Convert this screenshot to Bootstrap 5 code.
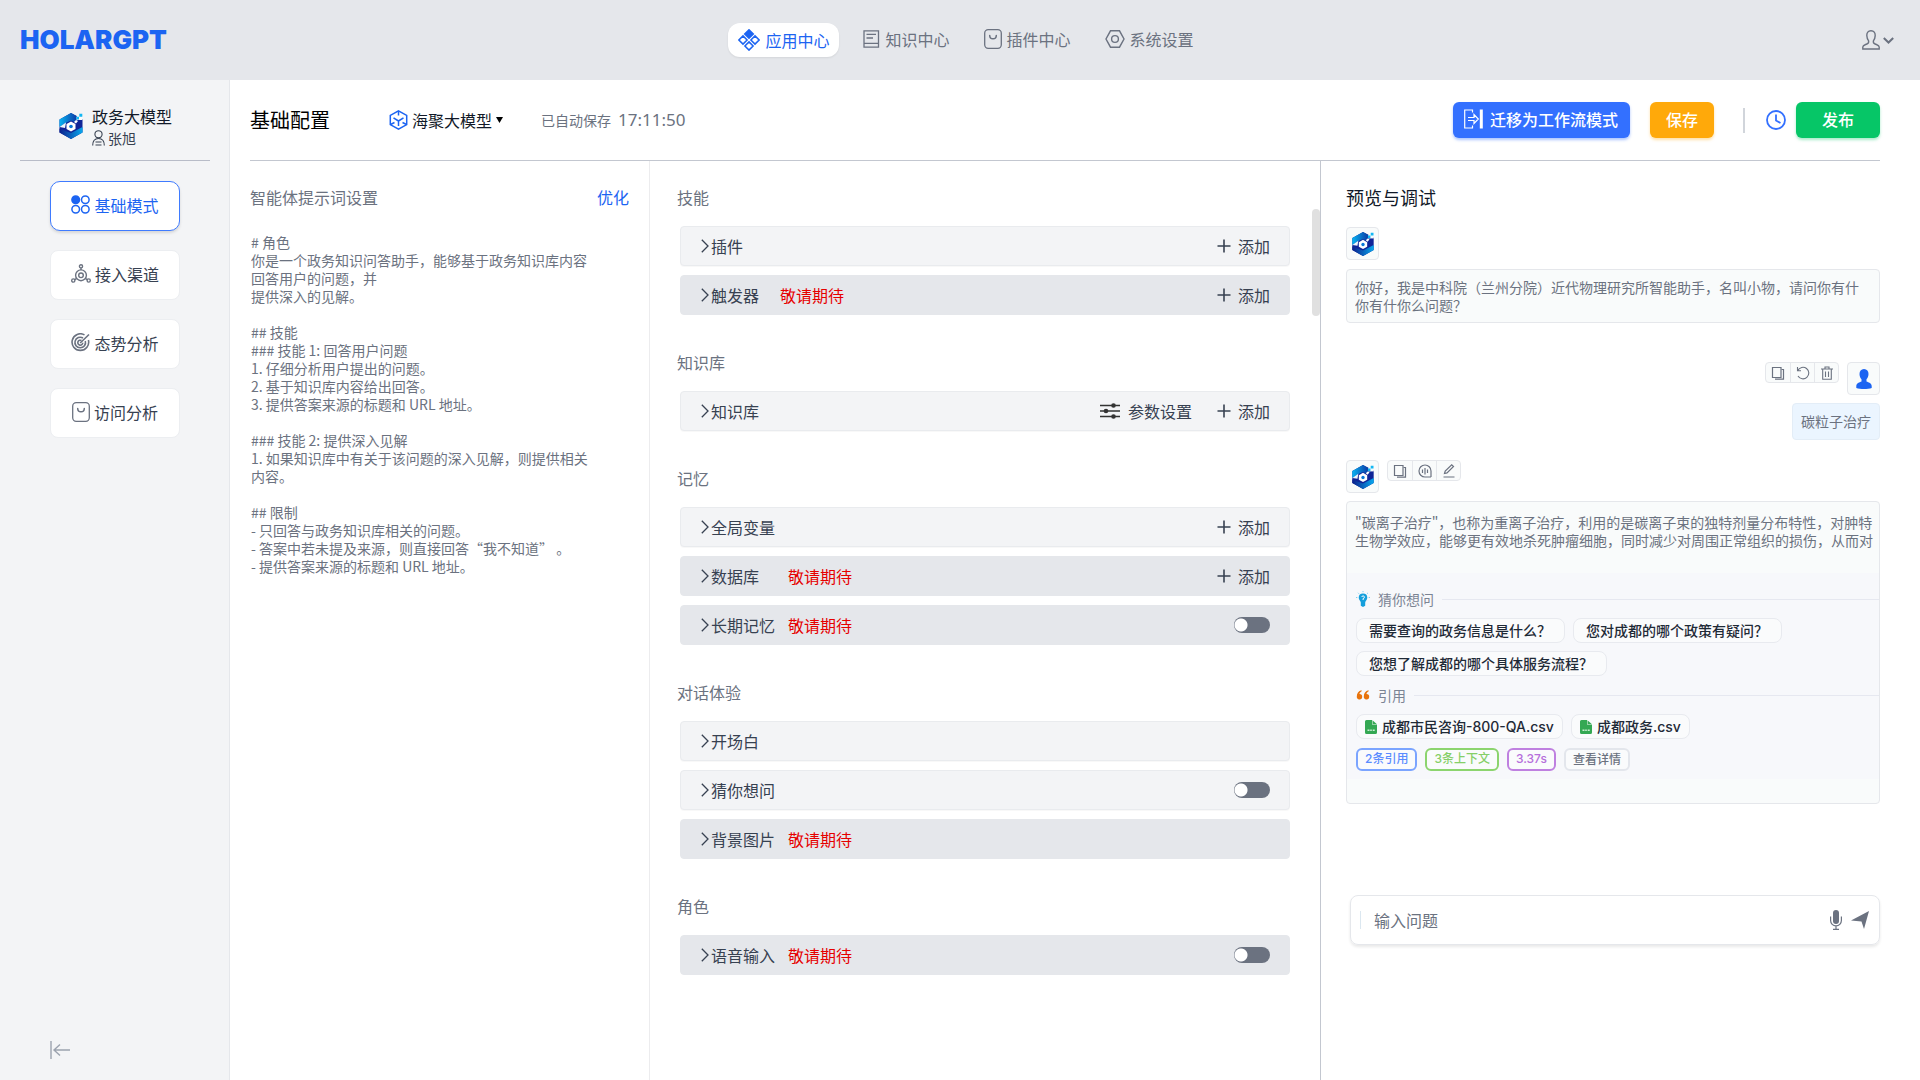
<!DOCTYPE html>
<html lang="zh-CN">
<head>
<meta charset="utf-8">
<meta name="viewport" content="width=device-width, initial-scale=1">
<title>HOLARGPT - 基础配置</title>
<link href="https://cdn.jsdelivr.net/npm/bootstrap@5.3.0/dist/css/bootstrap.min.css" rel="stylesheet">
<style>
  :root { --blue: #1c64f2; --ink: #374151; --muted-ink: #6b7280; --dark: #111928; --edge: #e5e7eb; --soft: #f9fbfb; }
  body { font-family: "Noto Sans CJK SC", "Noto Sans", sans-serif; font-size: 16px; line-height: 24px; color: var(--ink); background: #fff; }
  svg { display: block; flex: none; }
  a { text-decoration: none; }
  button { font: inherit; color: inherit; }
  .plain-btn { background: none; border: 0; padding: 0; }

  .topbar { height: 80px; background: #e5e7eb; padding: 0 26px 0 20px; }
  .topbar .side { flex: 1 1 0; }
  .brand { font: 900 26px/32px Inter, sans-serif; color: var(--blue); }
  .main-nav { gap: 14px; margin-left: 8px; }
  .main-nav a { height: 34px; padding: 0 10px 2px; gap: 5px; color: var(--muted-ink); }
  .main-nav a:last-child { padding-right: 0; }
  .main-nav a.active { background: #fff; color: var(--blue); border-radius: 12px; padding-bottom: 0; box-shadow: 0 1px 2px rgba(0,0,0,.08); }
  .account { color: var(--muted-ink); gap: 3px; }

  .shell { min-height: calc(100vh - 80px); }
  .sidebar { flex: 0 0 230px; background: #f3f4f6; border-right: 1px solid var(--edge); padding: 0 19px 20px 20px; }
  .profile { height: 81px; padding-left: 38px; padding-top: 12px; gap: 8px; border-bottom: 1px solid #b8bcc8; color: var(--dark); }
  .profile-user { font-size: 14px; line-height: 20px; color: var(--ink); gap: 3px; }
  .side-menu { gap: 19px; padding: 20px 30px 0; }
  .side-menu a { height: 50px; gap: 4px; background: #fff; border: 1px solid #eceef1; border-radius: 8px; color: var(--ink); padding-bottom: 3px; }
  .side-menu a.active { border-color: #3f7bff; border-radius: 10px; color: var(--blue); box-shadow: 0 2px 3px rgba(0,0,0,.12); }
  .collapse-btn { margin-left: 30px; }

  .workspace { flex: 1 1 0; min-width: 0; }
  .toolbar-row { height: 81px; margin: 0 40px 0 20px; border-bottom: 1px solid #c3c7d0; }
  .page-title { font-size: 20px; line-height: 28px; font-weight: 400; color: #000; margin: 0 59px 0 0; }
  .model-pick { gap: 4px; margin-right: 38px; color: var(--dark); }
  .autosave { font-size: 14px; color: var(--muted-ink); gap: 7px; }
  .autosave time { font-size: 17px; font-family: "Noto Sans", sans-serif; }
  .act { height: 36px; border: 0; border-radius: 6px; color: #fff; padding: 0 12px 2px; font-weight: 500; }
  .act-move { background: #3370ff; gap: 7px; padding-left: 11px; box-shadow: 0 2px 3px rgba(51,112,255,.4); }
  .act-save { background: #ffa90a; padding-left: 16px; padding-right: 16px; margin-left: 20px; box-shadow: 0 2px 3px rgba(255,169,10,.35); }
  .act-pub { background: #06c667; padding-left: 26px; padding-right: 26px; margin-left: 10px; box-shadow: 0 2px 3px rgba(6,198,103,.35); }
  .act-rule { width: 2px; height: 25px; background: #d1d5db; margin: 0 21px 0 29px; }

  .pane { min-width: 0; padding-top: 24px; }
  .pane-prompt { flex: 420 420 420px; border-right: 1px solid #ececee; padding-left: 20px; padding-right: 20px; }
  .pane-config { flex: 671 671 671px; border-right: 1px solid #c3c7d0; padding-left: 27px; padding-right: 30px; }
  .pane-chat { flex: 599 599 599px; padding-left: 25px; padding-right: 40px; }
  .pane-head { font-size: 16px; line-height: 24px; font-weight: 400; color: var(--muted-ink); margin: 0; }
  .tune-link { color: var(--blue); }
  .prompt-box { display: block; width: 100%; max-width: 346px; height: 480px; margin: 24px 0 0 1px; padding: 0; border: 0; resize: none; overflow: hidden; font-size: 14px; line-height: 18px; color: var(--muted-ink); background: none; }

  .cfg-group { margin-bottom: 35px; }
  .cfg-rows { margin: 17px 0 0 3px; gap: 9px; }
  .cfg-row { height: 40px; border-radius: 4px; padding: 0 19px 1px 20px; background: #f3f4f6; border: 1px solid #e9ebee; box-shadow: 0 1px 1px rgba(0,0,0,.03); }
  .cfg-row.pending { background: #e5e7eb; border-color: #e5e7eb; box-shadow: none; }
  .cfg-name { gap: 2px; min-width: 75px; }
  .cfg-name.tight { min-width: 67px; }
  .soon { color: #e60000; margin-left: 12px; }
  .add-btn { gap: 7px; }
  .tune-btn { gap: 8px; margin-right: 25px; }
  .toggle { appearance: none; width: 36px; height: 16px; margin: 0; border-radius: 8px; background: radial-gradient(circle at 7px 8px, #fff 6px, transparent 7px) #6b7280; cursor: pointer; }
  .toggle:checked { background: radial-gradient(circle at 29px 8px, #fff 6px, transparent 7px) var(--blue); }
  .scroll-thumb { position: absolute; right: 0; top: 48px; width: 8px; height: 107px; border-radius: 4px; background: #e0e0e0; }

  .chat-title { font-size: 18px; line-height: 24px; font-weight: 400; color: var(--dark); margin: 0 0 18px; }
  .face { width: 33px; height: 33px; border: 1px solid var(--edge); border-radius: 4px; background: var(--soft); }
  .bubble { font-size: 14px; line-height: 18px; color: var(--muted-ink); background: var(--soft); border: 1px solid var(--edge); border-radius: 4px; padding: 8px; }
  .bubble p { margin: 0; white-space: nowrap; overflow: hidden; }
  .greeting { margin-top: 9px; }
  .turn-user { margin-top: 39px; }
  .bubble-user { background: #ebf5ff; border-color: #e3edf7; padding-bottom: 9px; }
  .tools { height: 21px; border: 1px solid var(--edge); border-radius: 4px; background: var(--soft); }
  .tools button { width: 24px; color: var(--muted-ink); }
  .tools button + button { border-left: 1px solid var(--edge); }
  .answer { padding: 11px 0 24px; }
  .answer p { padding: 0 8px; }
  .extras { background: #f7f8fb; margin-top: 24px; padding: 16px 0 8px 9px; }
  .extras-head { gap: 8px; height: 20px; color: #7b8494; }
  .extras-head::after { content: ""; flex: 1; height: 1px; background: #e6e8f0; }
  .extras-list { margin: 9px 0; }
  .pill { height: 25px; border: 1px solid #e8eaef; border-radius: 8px; background: #fafbfc; color: #1f2a37; font-weight: 500; padding: 0 12px; white-space: nowrap; }
  .pill-ask { padding: 0 13px 2px 12px; }
  .pill-file { gap: 5px; padding: 0 8px; font-family: Inter, "Noto Sans CJK SC", sans-serif; }
  .tag { height: 23px; border: 2px solid #e3e6ec; border-radius: 6px; background: #fafbfc; font: 500 12px/18px Inter, "Noto Sans CJK SC", sans-serif; padding: 0 7px; white-space: nowrap; }
  .tag-blue { color: #5a8cff; border-color: #7ba4ff; }
  .tag-green { color: #86cf68; border-color: #8cd46e; }
  .tag-purple { color: #b66fdb; border-color: #bf80e0; }
  .ask-box { margin: 91px 0 0 4px; height: 50px; border: 1px solid var(--edge); border-radius: 8px; padding: 0 10px 0 9px; gap: 9px; box-shadow: 0 2px 3px rgba(0,0,0,.09); color: var(--muted-ink); }
  .ask-box input { border: 0; outline: 0; padding: 0 0 0 13px; border-left: 1px solid #dbe7f0; height: 18px; font: inherit; line-height: 18px; color: var(--muted-ink); background: none; min-width: 0; }
  .ask-box input::placeholder { color: var(--muted-ink); opacity: 1; }
</style>
<script src="https://cdn.jsdelivr.net/npm/bootstrap@5.3.0/dist/js/bootstrap.bundle.min.js"></script>
</head>
<body>
<svg width="0" height="0" class="position-absolute" aria-hidden="true">
  <defs>
    <linearGradient id="gA" x1="0" y1="0" x2="1" y2="0"><stop offset="0" stop-color="#08b4f2"/><stop offset="1" stop-color="#0a2a9c"/></linearGradient>
    <linearGradient id="gB" x1="0" y1="0" x2="1" y2="0"><stop offset="0" stop-color="#0b1f8c"/><stop offset="1" stop-color="#08a8ee"/></linearGradient>
    <symbol id="i-logo" viewBox="0 0 24 28">
      <path d="M.5 7.500 12 1l6 3.200V7h5.500v13.500L12 27 .5 20.500z" fill="#0f2497"/>
      <path d="M.5 15V7.500L12 1l6 3.200V7l2 1-3 3-5-2.500-4.500 2z" fill="url(#gA)"/>
      <path d="M.5 15 7 10.500 6 16z" fill="#eef6fb"/>
      <path d="M.5 16.500 6.500 19 12 21l11.500-6v5.500L12 27 .5 20.500z" fill="url(#gB)"/>
      <path d="M12 9.500 16.500 12v5L12 19.500 7.500 17v-5z" fill="#fff"/>
      <path d="M15 10l2-2 2 1-2 2.500z" fill="#fff"/>
      <circle cx="12" cy="14.500" r="1.800" fill="#0877d8"/>
      <path d="M17.500 4.500h6V8h-6z" fill="#f7fafc"/>
      <path d="M20.300 1.800h3v3h-3zM17.300 4.800h2.700v2.700h-2.700z" fill="#12b7f3"/>
    </symbol>
    <symbol id="i-bag" viewBox="0 0 18 20"><rect x=".7" y=".7" width="16.600" height="18.600" rx="3.500" fill="none" stroke="currentColor" stroke-width="1.300"/><path d="M5.700 6.500a3.300 3.300 0 0 0 6.600 0" fill="none" stroke="currentColor" stroke-width="1.500" stroke-linecap="round"/></symbol>
    <symbol id="i-plus" viewBox="0 0 14 14"><path d="M7 .5v13M.5 7h13" stroke="currentColor" stroke-width="1.600"/></symbol>
    <symbol id="i-gt" viewBox="0 0 8 14"><path d="M.8.8 7 7 .8 13.200" fill="none" stroke="currentColor" stroke-width="1.300"/></symbol>
    <symbol id="i-copy" viewBox="0 0 14 14"><path d="M1.500 1.500h8.500v10H1.500z" fill="none" stroke="currentColor" stroke-width="1.200"/><path d="M10.500 3.500H12.500V13.200H4" fill="none" stroke="currentColor" stroke-width="1.200"/></symbol>
    <symbol id="i-csv" viewBox="0 0 12 14"><path d="M1.500 0H7v4.500h5V12.500A1.500 1.500 0 0 1 10.500 14h-9A1.500 1.500 0 0 1 0 12.500v-11A1.500 1.500 0 0 1 1.500 0z" fill="#34a853"/><path d="M7.500.3 11.700 4H7.500z" fill="#34a853"/><path d="M2.500 10.200h2M5.200 10.200h1.600M7.700 10.200h2" stroke="#c9efd2" stroke-width="1.600"/></symbol>
  </defs>
</svg>

<header class="topbar d-flex align-items-center">
  <div class="side"><a class="brand" href="#">HOLARGPT</a></div>
  <nav class="main-nav d-flex" aria-label="主导航">
    <a class="active d-flex align-items-center" href="#">
      <svg width="22" height="22" viewBox="0 0 22 22" fill="none" stroke="currentColor" stroke-width="1.500"><path d="M11 .8 15.300 5 11 9.300 6.700 5z" fill="currentColor"/><path d="M5 6.900 9.100 11 5 15.100.9 11zM17 6.900l4.100 4.100-4.100 4.100-4.100-4.100zM11 12.900l4.100 4.100-4.100 4.100L6.900 17z"/></svg>
      应用中心</a>
    <a class="d-flex align-items-center" href="#">
      <svg width="17" height="18" viewBox="0 0 17 18" fill="none" stroke="currentColor" stroke-width="1.300"><path d="M1 .8h14.500v16.400H1zM1 13.300h14.500M3.500 4.300H13M3.500 8h6.500"/></svg>
      知识中心</a>
    <a class="d-flex align-items-center" href="#"><svg width="18" height="20"><use href="#i-bag"/></svg>插件中心</a>
    <a class="d-flex align-items-center" href="#">
      <svg width="20" height="18" viewBox="0 0 20 18" fill="none" stroke="currentColor" stroke-width="1.400"><path d="M5.500.8h9L19 9l-4.500 8.200h-9L1 9z"/><circle cx="10" cy="9" r="3.400"/></svg>
      系统设置</a>
  </nav>
  <div class="side d-flex justify-content-end">
    <button class="account plain-btn d-flex align-items-center" type="button" aria-label="账户">
      <svg width="18" height="20" viewBox="0 0 18 20" fill="none" stroke="currentColor" stroke-width="1.400"><path d="M9 .8c-3 0-4.300 2-4.200 4.800.1 2.300.8 4 1.800 5.300.3 1.400-.2 2.500-1.700 3.100C2.500 15 .8 15.200.8 17v2h16.400v-2c0-1.800-1.700-2-4.100-3-1.500-.6-2-1.700-1.700-3.100 1-1.300 1.700-3 1.800-5.300C13.300 2.800 12 .8 9 .8z"/></svg>
      <svg width="11" height="7" viewBox="0 0 11 7" fill="none" stroke="currentColor" stroke-width="2"><path d="M.8 1 5.500 5.500 10.200 1"/></svg>
    </button>
  </div>
</header>

<div class="shell d-flex">
  <aside class="sidebar d-flex flex-column">
    <div class="profile d-flex align-items-center">
      <svg width="26" height="28"><use href="#i-logo"/></svg>
      <div>
        <div>政务大模型</div>
        <div class="profile-user d-flex align-items-center">
          <svg width="13" height="16" viewBox="0 0 13 16" fill="none" stroke="currentColor" stroke-width="1.100"><circle cx="6.500" cy="4.300" r="3.600"/><path d="M.7 15.500c0-4 1.500-7 5.800-7s5.800 3 5.800 7M3.500 12h6M3.500 15h6"/></svg>
          张旭</div>
      </div>
    </div>
    <nav class="side-menu d-flex flex-column" aria-label="应用菜单">
      <a class="active d-flex align-items-center justify-content-center" href="#">
        <svg width="19" height="19" viewBox="0 0 19 19" fill="none" stroke="currentColor" stroke-width="1.500"><circle cx="4.700" cy="4.700" r="3.800" fill="currentColor"/><circle cx="14.300" cy="4.700" r="3.800"/><circle cx="4.700" cy="14.300" r="3.800"/><circle cx="14.300" cy="14.300" r="3.800"/></svg>
        基础模式</a>
      <a class="d-flex align-items-center justify-content-center" href="#">
        <svg width="20" height="19" viewBox="0 0 20 19" fill="none" stroke="#6b7280" stroke-width="1.400"><circle cx="10" cy="11.300" r="5.400"/><circle cx="10" cy="11.300" r="2.300"/><circle cx="10" cy="2.300" r="1.600"/><circle cx="2.300" cy="16.500" r="1.600"/><circle cx="17.700" cy="16.500" r="1.600"/><path d="M10 4v2M3.700 15.600l1.700-1M16.300 15.600l-1.700-1"/></svg>
        接入渠道</a>
      <a class="d-flex align-items-center justify-content-center" href="#">
        <svg width="19" height="19" viewBox="0 0 19 19" fill="none" stroke="#6b7280" stroke-width="1.600"><path d="M13.500 1.900A8.300 8.300 0 1 0 17.400 7"/><path d="M12 5A5.300 5.300 0 1 0 14.300 8"/><path d="M10.500 7.500A2.500 2.500 0 1 0 11.800 9.800"/><path d="M9.200 10 18 1.500"/></svg>
        态势分析</a>
      <a class="d-flex align-items-center justify-content-center" href="#"><svg width="18" height="20" color="#6b7280"><use href="#i-bag"/></svg>访问分析</a>
    </nav>
    <button class="collapse-btn plain-btn mt-auto align-self-start" type="button" aria-label="收起侧栏">
      <svg width="20" height="20" viewBox="0 0 20 20" fill="none" stroke="#9ca3af" stroke-width="1.400"><path d="M1 1v18M20 10H4M10 4.500 4 10l6 5.500"/></svg>
    </button>
  </aside>

  <main class="workspace d-flex flex-column">
    <div class="toolbar-row d-flex align-items-center">
      <h1 class="page-title">基础配置</h1>
      <button class="model-pick plain-btn d-flex align-items-center" type="button">
        <svg width="19" height="20" viewBox="0 0 19 20" fill="none" stroke="#1c64f2" stroke-width="1.500"><path d="M9.500.9 17.700 5.400v9.200l-8.200 4.500-8.200-4.500V5.400z"/><path d="M9.500 11v5M9.500 11 4.500 7.800M9.500 11l5-3.200M9.500 1v4.500M1.500 14.500l4-2M17.500 14.500l-4-2"/></svg>
        海聚大模型
        <svg width="7" height="6" viewBox="0 0 7 6"><path d="M0 0h7L3.500 6z" fill="#000"/></svg>
      </button>
      <div class="autosave d-flex align-items-center"><span>已自动保存</span><time>17:11:50</time></div>
      <div class="d-flex align-items-center ms-auto">
        <button class="act act-move d-flex align-items-center" type="button">
          <svg width="19" height="20" viewBox="0 0 19 20" fill="none" stroke="#fff" stroke-width="1.200"><path d="M8.500 3.500V1H.7v18h7.800v-2.500M4 8.500h6V5.500L14.300 10 10 14.500v-3H4"/><path d="M17.300 .5v19" stroke-width="3"/></svg>
          迁移为工作流模式</button>
        <button class="act act-save" type="button">保存</button>
        <span class="act-rule"></span>
        <button class="plain-btn" type="button" aria-label="历史记录"><svg width="20" height="20" viewBox="0 0 20 20" fill="none" stroke="#3370ff" stroke-width="1.800"><circle cx="10" cy="10" r="9"/><path d="M10 4.500v6l4.500 2.500"/></svg></button>
        <button class="act act-pub" type="button">发布</button>
      </div>
    </div>

    <div class="d-flex flex-grow-1">
      <section class="pane pane-prompt">
        <div class="d-flex justify-content-between">
          <label class="pane-head" for="prompt">智能体提示词设置</label>
          <a class="tune-link" href="#">优化</a>
        </div>
        <textarea class="prompt-box" id="prompt" spellcheck="false"># 角色
你是一个政务知识问答助手，能够基于政务知识库内容回答用户的问题，并
提供深入的见解。

## 技能
### 技能 1: 回答用户问题
1. 仔细分析用户提出的问题。
2. 基于知识库内容给出回答。
3. 提供答案来源的标题和 URL 地址。

### 技能 2: 提供深入见解
1. 如果知识库中有关于该问题的深入见解，则提供相关内容。

## 限制
- 只回答与政务知识库相关的问题。
- 答案中若未提及来源，则直接回答“我不知道” 。
- 提供答案来源的标题和 URL 地址。</textarea>
      </section>

      <section class="pane pane-config position-relative">
        <span class="scroll-thumb"></span>
        <div class="cfg-group">
          <h2 class="pane-head">技能</h2>
          <div class="cfg-rows d-flex flex-column">
            <div class="cfg-row d-flex align-items-center">
              <button class="cfg-name plain-btn d-flex align-items-center" type="button"><svg width="8" height="14"><use href="#i-gt"/></svg>插件</button>
              <button class="add-btn plain-btn d-flex align-items-center ms-auto" type="button"><svg width="14" height="14"><use href="#i-plus"/></svg>添加</button>
            </div>
            <div class="cfg-row pending d-flex align-items-center">
              <button class="cfg-name tight plain-btn d-flex align-items-center" type="button"><svg width="8" height="14"><use href="#i-gt"/></svg>触发器</button>
              <span class="soon">敬请期待</span>
              <button class="add-btn plain-btn d-flex align-items-center ms-auto" type="button"><svg width="14" height="14"><use href="#i-plus"/></svg>添加</button>
            </div>
          </div>
        </div>
        <div class="cfg-group">
          <h2 class="pane-head">知识库</h2>
          <div class="cfg-rows d-flex flex-column">
            <div class="cfg-row d-flex align-items-center">
              <button class="cfg-name plain-btn d-flex align-items-center" type="button"><svg width="8" height="14"><use href="#i-gt"/></svg>知识库</button>
              <button class="tune-btn plain-btn d-flex align-items-center ms-auto" type="button">
                <svg width="20" height="16" viewBox="0 0 20 16"><path d="M0 2.500h20M0 8h20M0 13.500h20" stroke="#333" stroke-width="1.500"/><circle cx="13.500" cy="2.500" r="2.300" fill="#333"/><circle cx="6" cy="8" r="2.300" fill="#333"/><circle cx="13.500" cy="13.500" r="2.300" fill="#333"/></svg>
                参数设置</button>
              <button class="add-btn plain-btn d-flex align-items-center" type="button"><svg width="14" height="14"><use href="#i-plus"/></svg>添加</button>
            </div>
          </div>
        </div>
        <div class="cfg-group">
          <h2 class="pane-head">记忆</h2>
          <div class="cfg-rows d-flex flex-column">
            <div class="cfg-row d-flex align-items-center">
              <button class="cfg-name plain-btn d-flex align-items-center" type="button"><svg width="8" height="14"><use href="#i-gt"/></svg>全局变量</button>
              <button class="add-btn plain-btn d-flex align-items-center ms-auto" type="button"><svg width="14" height="14"><use href="#i-plus"/></svg>添加</button>
            </div>
            <div class="cfg-row pending d-flex align-items-center">
              <button class="cfg-name plain-btn d-flex align-items-center" type="button"><svg width="8" height="14"><use href="#i-gt"/></svg>数据库</button>
              <span class="soon">敬请期待</span>
              <button class="add-btn plain-btn d-flex align-items-center ms-auto" type="button"><svg width="14" height="14"><use href="#i-plus"/></svg>添加</button>
            </div>
            <div class="cfg-row pending d-flex align-items-center">
              <button class="cfg-name plain-btn d-flex align-items-center" type="button"><svg width="8" height="14"><use href="#i-gt"/></svg>长期记忆</button>
              <span class="soon">敬请期待</span>
              <input class="toggle ms-auto" type="checkbox" role="switch" aria-label="长期记忆">
            </div>
          </div>
        </div>
        <div class="cfg-group">
          <h2 class="pane-head">对话体验</h2>
          <div class="cfg-rows d-flex flex-column">
            <div class="cfg-row d-flex align-items-center">
              <button class="cfg-name plain-btn d-flex align-items-center" type="button"><svg width="8" height="14"><use href="#i-gt"/></svg>开场白</button>
            </div>
            <div class="cfg-row d-flex align-items-center">
              <button class="cfg-name plain-btn d-flex align-items-center" type="button"><svg width="8" height="14"><use href="#i-gt"/></svg>猜你想问</button>
              <input class="toggle ms-auto" type="checkbox" role="switch" aria-label="猜你想问">
            </div>
            <div class="cfg-row pending d-flex align-items-center">
              <button class="cfg-name plain-btn d-flex align-items-center" type="button"><svg width="8" height="14"><use href="#i-gt"/></svg>背景图片</button>
              <span class="soon">敬请期待</span>
            </div>
          </div>
        </div>
        <div class="cfg-group">
          <h2 class="pane-head">角色</h2>
          <div class="cfg-rows d-flex flex-column">
            <div class="cfg-row pending d-flex align-items-center">
              <button class="cfg-name plain-btn d-flex align-items-center" type="button"><svg width="8" height="14"><use href="#i-gt"/></svg>语音输入</button>
              <span class="soon">敬请期待</span>
              <input class="toggle ms-auto" type="checkbox" role="switch" aria-label="语音输入">
            </div>
          </div>
        </div>
      </section>

      <section class="pane pane-chat">
        <h2 class="chat-title">预览与调试</h2>
        <div class="face d-flex align-items-center justify-content-center"><svg width="24" height="26"><use href="#i-logo"/></svg></div>
        <div class="bubble greeting"><p>你好，我是中科院（兰州分院）近代物理研究所智能助手，名叫小物，请问你有什<br>你有什你么问题？</p></div>

        <div class="turn-user d-flex justify-content-end">
          <div class="tools d-flex">
            <button class="plain-btn d-flex align-items-center justify-content-center" type="button" aria-label="复制"><svg width="14" height="14"><use href="#i-copy"/></svg></button>
            <button class="plain-btn d-flex align-items-center justify-content-center" type="button" aria-label="重试"><svg width="14" height="14" viewBox="0 0 14 14" fill="none" stroke="currentColor" stroke-width="1.100"><path d="M1.800 4.500A5.800 5.800 0 1 1 2 10M1.500 1v3.700H5"/></svg></button>
            <button class="plain-btn d-flex align-items-center justify-content-center" type="button" aria-label="删除"><svg width="12" height="14" viewBox="0 0 12 14" fill="none" stroke="currentColor" stroke-width="1.100"><path d="M0 3h12M4 3V1h4v2M1.700 3v10.200h8.600V3M4.500 5.500v5.500M7.500 5.500v5.500"/></svg></button>
          </div>
          <div class="face d-flex align-items-center justify-content-center ms-2"><svg width="16" height="20" viewBox="0 0 16 20"><path d="M8 0C5 0 3.500 2.200 3.500 5c0 2.200.8 4 2 5.200v2.300C3.500 13.500.3 14 .3 17v2c4 1.300 11.400 1.300 15.400 0v-2c0-3-3.200-3.500-5.200-4.500v-2.300c1.200-1.200 2-3 2-5.200C12.500 2.200 11 0 8 0z" fill="#1c64f2"/></svg></div>
        </div>
        <div class="d-flex justify-content-end mt-2"><div class="bubble bubble-user">碳粒子治疗</div></div>

        <div class="d-flex mt-3 pt-1">
          <div class="face d-flex align-items-center justify-content-center me-2"><svg width="24" height="26"><use href="#i-logo"/></svg></div>
          <div class="tools d-flex">
            <button class="plain-btn d-flex align-items-center justify-content-center" type="button" aria-label="复制"><svg width="14" height="14"><use href="#i-copy"/></svg></button>
            <button class="plain-btn d-flex align-items-center justify-content-center" type="button" aria-label="朗读"><svg width="14" height="14" viewBox="0 0 14 14" fill="none" stroke="currentColor" stroke-width="1.200"><path d="M13 13V7a6 6 0 1 0-6 6h6M4.500 5.500v3.500M7 4v6.500M9.500 5.500v3.500"/></svg></button>
            <button class="plain-btn d-flex align-items-center justify-content-center" type="button" aria-label="编辑"><svg width="12" height="14" viewBox="0 0 12 14" fill="none" stroke="currentColor" stroke-width="1.200"><path d="M.5 13h11M1.500 9.500 2.200 7 8.700.8l1.800 1.700L4 8.900z"/></svg></button>
          </div>
        </div>
        <div class="bubble answer mt-2">
          <p>"碳离子治疗"，也称为重离子治疗，利用的是碳离子束的独特剂量分布特性，对肿特<br>生物学效应，能够更有效地杀死肿瘤细胞，同时减少对周围正常组织的损伤，从而对</p>
          <div class="extras">
            <div class="extras-head d-flex align-items-center">
              <svg width="14" height="16" viewBox="0 0 14 16"><path d="M7 2.500a4.300 4.300 0 0 0-4.300 4.200c0 2 1.800 2.800 2.100 4.800v3.300L7 16l2.200-1.200v-3.300c.3-2 2.100-2.800 2.100-4.800A4.300 4.300 0 0 0 7 2.500z" fill="#159fdc"/><path d="M7 0v1.200M2 1.800l.9.900M12 1.800l-.9.9M0 6.500h1.300M12.700 6.500H14" stroke="#7fd0f2"/><path d="M5.800 6a1.300 1.300 0 1 1 1.300 1.500V9" stroke="#fff" fill="none"/></svg>
              猜你想问</div>
            <div class="extras-list d-flex flex-wrap gap-2">
              <button class="pill pill-ask" type="button">需要查询的政务信息是什么？</button>
              <button class="pill pill-ask" type="button">您对成都的哪个政策有疑问？</button>
              <button class="pill pill-ask" type="button">您想了解成都的哪个具体服务流程？</button>
            </div>
            <div class="extras-head d-flex align-items-center">
              <svg width="14" height="10" viewBox="0 0 14 10"><path d="M5.500.3C2.500 1 .8 3.300.8 6.500A2.700 2.700 0 1 0 3.500 4c.2-1.200.9-2 2.200-2.700zM12.500.3C9.500 1 7.800 3.300 7.800 6.500A2.700 2.700 0 1 0 10.500 4c.2-1.200.9-2 2.200-2.700z" fill="#e8730c"/></svg>
              引用</div>
            <div class="extras-list d-flex flex-wrap gap-2">
              <a class="pill pill-file d-flex align-items-center" href="#"><svg width="12" height="14"><use href="#i-csv"/></svg>成都市民咨询-800-QA.csv</a>
              <a class="pill pill-file d-flex align-items-center" href="#"><svg width="12" height="14"><use href="#i-csv"/></svg>成都政务.csv</a>
            </div>
            <div class="d-flex flex-wrap gap-2">
              <span class="tag tag-blue">2条引用</span>
              <span class="tag tag-green">3条上下文</span>
              <span class="tag tag-purple">3.37s</span>
              <button class="tag" type="button">查看详情</button>
            </div>
          </div>
        </div>

        <div class="ask-box d-flex align-items-center">
          <input class="flex-grow-1" type="text" placeholder="输入问题" aria-label="输入问题">
          <button class="plain-btn" type="button" aria-label="语音"><svg width="12" height="20" viewBox="0 0 12 20" fill="none" stroke="currentColor" stroke-width="1.200"><rect x="3" y="0" width="6" height="14" rx="3" fill="currentColor" stroke="none"/><path d="M.6 6.500v4a5.400 5.400 0 0 0 10.800 0v-4M6 16v3M3 19.300h6"/></svg></button>
          <button class="plain-btn" type="button" aria-label="发送"><svg width="18" height="18" viewBox="0 0 18 18"><path d="M18 0 13 18 10.500 10.500 0 9.500z" fill="currentColor"/></svg></button>
        </div>
      </section>
    </div>
  </main>
</div>
</body>
</html>
